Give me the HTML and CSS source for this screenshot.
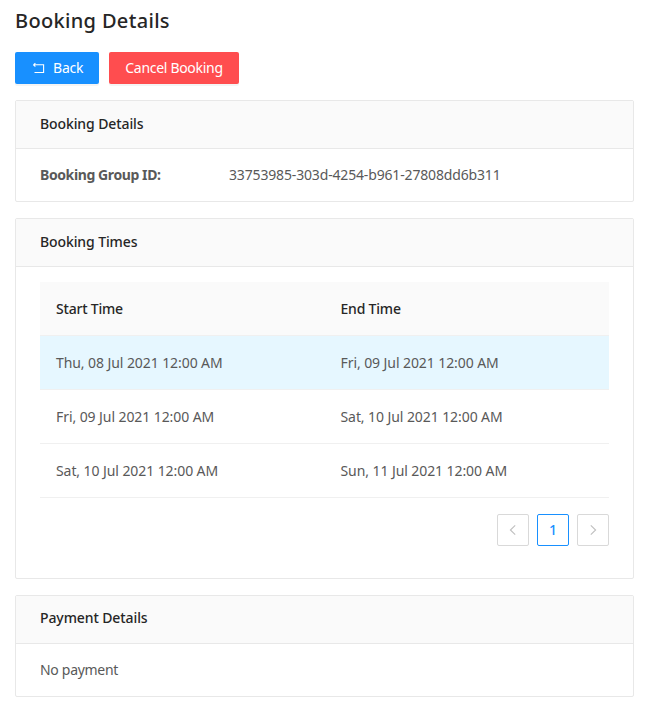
FILE: index.html
```html
<!DOCTYPE html>
<html lang="en">
<head>
<meta charset="utf-8">
<title>Booking Details</title>
<link rel="stylesheet" href="styles.css">
</head>
<body>
<main class="page">
  <h1 class="title">Booking Details</h1>
  <div class="actions">
    <button class="btn btn-primary" type="button">
      <svg class="btn-icon" viewBox="0 0 14 14" width="14" height="14" aria-hidden="true"><path d="M2.4 3.8H12.6V11.5H3.5M2.4 3.8L4.4 2.1M2.4 3.8L4.4 5.5" fill="none" stroke="currentColor" stroke-width="1.1"/></svg>
      <span>Back</span>
    </button>
    <button class="btn btn-danger" type="button">Cancel Booking</button>
  </div>

  <section class="card">
    <header class="card-head">Booking Details</header>
    <div class="card-body detail-row">
      <span class="detail-label">Booking Group ID:</span>
      <span class="detail-value">33753985-303d-4254-b961-27808dd6b311</span>
    </div>
  </section>

  <section class="card">
    <header class="card-head">Booking Times</header>
    <div class="card-body table-body">
      <table class="table">
        <thead>
          <tr><th>Start Time</th><th>End Time</th></tr>
        </thead>
        <tbody>
          <tr class="selected"><td>Thu, 08 Jul 2021 12:00 AM</td><td>Fri, 09 Jul 2021 12:00 AM</td></tr>
          <tr><td>Fri, 09 Jul 2021 12:00 AM</td><td>Sat, 10 Jul 2021 12:00 AM</td></tr>
          <tr><td>Sat, 10 Jul 2021 12:00 AM</td><td>Sun, 11 Jul 2021 12:00 AM</td></tr>
        </tbody>
      </table>
      <nav class="pagination">
        <span class="page-item">
          <svg viewBox="0 0 12 12" width="12" height="12" aria-hidden="true"><path d="M8.2 1.4L3.4 6L8.2 10.6" fill="none" stroke="currentColor" stroke-width="1.1"/></svg>
        </span>
        <span class="page-item page-active">1</span>
        <span class="page-item">
          <svg viewBox="0 0 12 12" width="12" height="12" aria-hidden="true"><path d="M3.8 1.4L8.6 6L3.8 10.6" fill="none" stroke="currentColor" stroke-width="1.1"/></svg>
        </span>
      </nav>
    </div>
  </section>

  <section class="card">
    <header class="card-head">Payment Details</header>
    <div class="card-body payment-body">No payment</div>
  </section>
</main>
</body>
</html>
```

FILE: styles.css
```css
* { box-sizing: border-box; }
html, body { margin: 0; padding: 0; background: #fff; }
body {
  font-family: "Noto Sans", "Open Sans", sans-serif;
  font-size: 14px;
  line-height: 20px;
  color: #595959;
}
.page { padding: 7px 11px 0 15px; display: flex; flex-direction: column; }
.title {
  margin: 0 0 17px;
  font-size: 20px;
  line-height: 28px;
  font-weight: 500;
  letter-spacing: 0.33px;
  color: #262626;
}
.actions { display: flex; gap: 10px; margin-bottom: 16px; }
.btn {
  height: 32px;
  border: 0;
  border-radius: 2px;
  padding: 0 16px;
  font: inherit;
  color: #fff;
  display: flex;
  align-items: center;
  box-shadow: 0 2px 0 rgba(0, 0, 0, 0.045);
}
.btn-primary { background: #1890ff; width: 84px; gap: 8px; letter-spacing: -0.2px; }
.btn-danger { background: #ff4d4f; width: 130px; justify-content: center; padding: 0; letter-spacing: -0.3px; }
.btn-icon { flex: none; }
.card {
  border: 1px solid #e8e8e8;
  border-radius: 2px;
  margin-bottom: 16px;
}
.card-head {
  height: 48px;
  padding: 0 24px 2px;
  display: flex;
  align-items: center;
  background: #fafafa;
  border-bottom: 1px solid #e8e8e8;
  font-weight: 500;
  letter-spacing: -0.1px;
  color: #262626;
}
.card-body { padding: 16px 24px; }
.table-body { padding: 15px 24px 32px; }
.payment-body { letter-spacing: -0.3px; }
.detail-row { display: flex; }
.detail-label { width: 189px; font-weight: 700; letter-spacing: -0.4px; }
.detail-value { letter-spacing: -0.16px; }
.table { width: 100%; border-collapse: collapse; table-layout: fixed; letter-spacing: -0.08px; }
.table th, .table td {
  height: 54px;
  padding: 2px 16px 0;
  text-align: left;
  border-bottom: 1px solid #f0f0f0;
}
.table th { height: 53px; background: #fafafa; font-weight: 500; letter-spacing: -0.2px; color: #262626; }
.table .selected td { background: #e6f7ff; }
.pagination { display: flex; justify-content: flex-end; gap: 8px; margin-top: 16px; }
.page-item {
  width: 32px;
  height: 32px;
  border: 1px solid #d9d9d9;
  border-radius: 2px;
  display: flex;
  align-items: center;
  justify-content: center;
  color: #bfbfbf;
}
.page-active { border-color: #1890ff; color: #1890ff; font-weight: 500; }
```
